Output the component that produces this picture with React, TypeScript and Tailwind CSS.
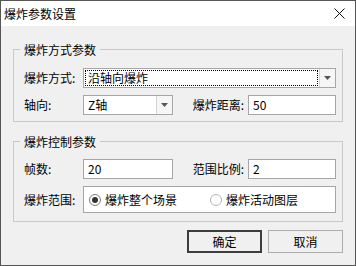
import React from 'react';

const ComboBox: React.FC<{ value: string; width: string; focused?: boolean }> = ({ value, width, focused }) => {
    return (
        <div className={`${width} h-[20px] flex border border-[#a6a6a6] bg-white`}>
            <div className="flex-1 p-[1px]">
                <div
                    className={`h-full flex items-center pl-[2px] ${
                        focused ? 'border border-dotted border-black' : 'border border-transparent'
                    }`}
                >
                    {value}
                </div>
            </div>
            <div className="w-[16px] flex items-center justify-center border-l border-[#d4d4d4] bg-[#f6f6f6]">
                <svg width="7" height="4" viewBox="0 0 7 4">
                    <path d="M0 0 H7 L3.5 4 Z" fill="#555" />
                </svg>
            </div>
        </div>
    );
};

const TextBox: React.FC<{ value: string; width: string }> = ({ value, width }) => {
    return (
        <div className={`${width} h-[20px] flex items-center pl-[4px] border border-[#a6a6a6] bg-white`}>
            {value}
        </div>
    );
};

const Radio: React.FC<{ label: string; checked?: boolean }> = ({ label, checked }) => {
    return (
        <div className="flex items-center gap-[4px]">
            <span
                className={`w-[12px] h-[12px] rounded-full border bg-white flex items-center justify-center ${
                    checked ? 'border-[#7a7a7a]' : 'border-[#b4b4b4]'
                }`}
            >
                {checked && <span className="w-[6px] h-[6px] rounded-full bg-[#333]" />}
            </span>
            <span>{label}</span>
        </div>
    );
};

const GroupBox: React.FC<{ title: string; className?: string; children: React.ReactNode }> = ({
    title,
    className,
    children,
}) => {
    return (
        <fieldset className={`border border-[#c8c8c8] px-[10px] pr-[6px] ${className ?? ''}`}>
            <legend className="ml-[-4px] px-[4px] leading-[17px]">{title}</legend>
            {children}
        </fieldset>
    );
};

export default function App() {
    return (
        <div className="w-[356px] h-[266px] flex flex-col border border-[#555] bg-[#f0f0f0] text-[12px] leading-[16px] text-black font-['Noto_Sans_CJK_SC','Microsoft_YaHei',sans-serif]">
            {/* Title bar */}
            <div className="h-[25px] shrink-0 flex items-center justify-between bg-white pl-[3px] pr-[10px]">
                <span>爆炸参数设置</span>
                <svg width="11" height="11" viewBox="0 0 11 11">
                    <path d="M0.5 0.5 L10.5 10.5 M10.5 0.5 L0.5 10.5" stroke="#111" strokeWidth="1" />
                </svg>
            </div>

            <div className="flex-1 flex flex-col px-[12px] pt-[15px]">
                <GroupBox title="爆炸方式参数" className="pt-[10px] pb-[6px]">
                    <div className="flex flex-col gap-[7px]">
                        <div className="flex items-center">
                            <span className="w-[59px]">爆炸方式:</span>
                            <ComboBox value="沿轴向爆炸" width="w-[253px]" focused />
                        </div>
                        <div className="flex items-center">
                            <span className="w-[59px]">轴向:</span>
                            <ComboBox value="Z轴" width="w-[90px]" />
                            <span className="w-[75px] text-right pr-[4px]">爆炸距离:</span>
                            <TextBox value="50" width="w-[88px]" />
                        </div>
                    </div>
                </GroupBox>

                <GroupBox title="爆炸控制参数" className="mt-[11px] pt-[9px] pb-[8px]">
                    <div className="flex flex-col gap-[7px]">
                        <div className="flex items-center">
                            <span className="w-[59px]">帧数:</span>
                            <TextBox value="20" width="w-[90px]" />
                            <span className="w-[75px] text-right pr-[4px]">范围比例:</span>
                            <TextBox value="2" width="w-[88px]" />
                        </div>
                        <div className="flex items-center">
                            <span className="w-[59px]">爆炸范围:</span>
                            <div className="w-[253px] h-[27px] flex items-center border border-[#a6a6a6] bg-white">
                                <div className="w-[126px] pl-[5px]">
                                    <Radio label="爆炸整个场景" checked />
                                </div>
                                <div>
                                    <Radio label="爆炸活动图层" />
                                </div>
                            </div>
                        </div>
                    </div>
                </GroupBox>

                <div className="flex justify-end gap-[6px] mt-[8px]">
                    <button className="w-[75px] h-[23px] border-2 border-[#3c3c3c] bg-[#f0f0f0]">确定</button>
                    <button className="w-[75px] h-[23px] border border-[#adadad] bg-[#f0f0f0]">取消</button>
                </div>
            </div>
        </div>
    );
}
